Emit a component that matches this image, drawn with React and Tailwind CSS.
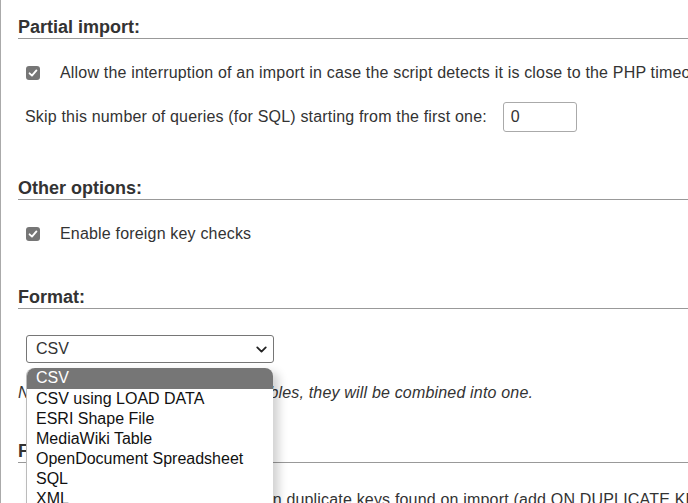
import { ChevronDown } from "lucide-react";

const FORMATS = [
  "CSV",
  "CSV using LOAD DATA",
  "ESRI Shape File",
  "MediaWiki Table",
  "OpenDocument Spreadsheet",
  "SQL",
  "XML",
];

function Legend({ children }) {
  return (
    <div className="mr-[-40px] border-b border-[#999] text-[18px] font-bold leading-[22px] tracking-normal text-[#333]">
      {children}
    </div>
  );
}

function CheckRow({ children }) {
  return (
    <div className="flex h-5 items-center pl-[8px]">
      <span className="flex h-[14px] w-[14px] shrink-0 items-center justify-center rounded-[3px] bg-[#767676]">
        <svg viewBox="0 0 14 14" className="h-[12px] w-[12px]" fill="none">
          <path
            d="M3 7.4 5.8 10 11 4"
            stroke="#fff"
            strokeWidth="2.2"
            strokeLinecap="round"
            strokeLinejoin="round"
          />
        </svg>
      </span>
      <span className="ml-[20px] whitespace-nowrap">{children}</span>
    </div>
  );
}

export default function App() {
  return (
    <div
      className="h-[503px] w-[688px] overflow-hidden border-l border-[#aaa] bg-white text-[16px] leading-5 tracking-[0.18px] text-[#333]"
      style={{ fontFamily: '"Liberation Sans", Arial, sans-serif' }}
    >
      <div className="pl-[17px] pt-4">
        {/* Partial import */}
        <Legend>Partial import:</Legend>
        <div className="mt-6">
          <CheckRow>
            Allow the interruption of an import in case the script detects it is close to the PHP timeout limit.
          </CheckRow>
        </div>
        <div className="mt-[19px] flex h-[30px] items-center pl-[7px]">
          <span className="whitespace-nowrap">
            Skip this number of queries (for SQL) starting from the first one:
          </span>
          <div className="ml-[16px] flex h-[30px] w-[74px] shrink-0 items-center rounded-[3px] border border-[#aaa] pl-[7px]">
            0
          </div>
        </div>

        {/* Other options */}
        <div className="mt-[45px]">
          <Legend>Other options:</Legend>
        </div>
        <div className="mt-6">
          <CheckRow>Enable foreign key checks</CheckRow>
        </div>

        {/* Format */}
        <div className="mt-[42px]">
          <Legend>Format:</Legend>
        </div>
        <div className="relative mt-[26px] pl-[8px] tracking-normal">
          <div className="flex h-[28px] w-[248px] items-center justify-between rounded-[3px] border border-[#767676] pl-[9px] pr-[3px]">
            <span>CSV</span>
            <ChevronDown size={17} strokeWidth={2.6} className="text-[#222]" />
          </div>

          {/* open option list */}
          <div className="absolute left-[8px] top-[33px] z-10 w-[247px] rounded-t-[8px] border-l border-[#bbb] bg-white shadow-[6px_4px_10px_rgba(0,0,0,0.18)]">
            {FORMATS.map((f, i) => (
              <div
                key={f}
                className={
                  i === 0
                    ? "h-[20.5px] rounded-t-[8px] bg-[#767676] pl-[9px] leading-[20.5px] text-white"
                    : "h-[20.2px] pl-[9px] leading-[20.2px] text-[#111]"
                }
              >
                {f}
              </div>
            ))}
          </div>
        </div>
        <div className="mt-[20px] whitespace-nowrap italic">
          Note: If the file contains multiple tables, they will be combined into one.
        </div>

        {/* Format-specific options */}
        <div className="mt-[37px]">
          <Legend>Format-specific options:</Legend>
        </div>
        <div className="mt-[27px] pl-[89px]">
          <CheckRow>
            Update data when duplicate keys found on import (add ON DUPLICATE KEY UPDATE)
          </CheckRow>
        </div>
      </div>
    </div>
  );
}
